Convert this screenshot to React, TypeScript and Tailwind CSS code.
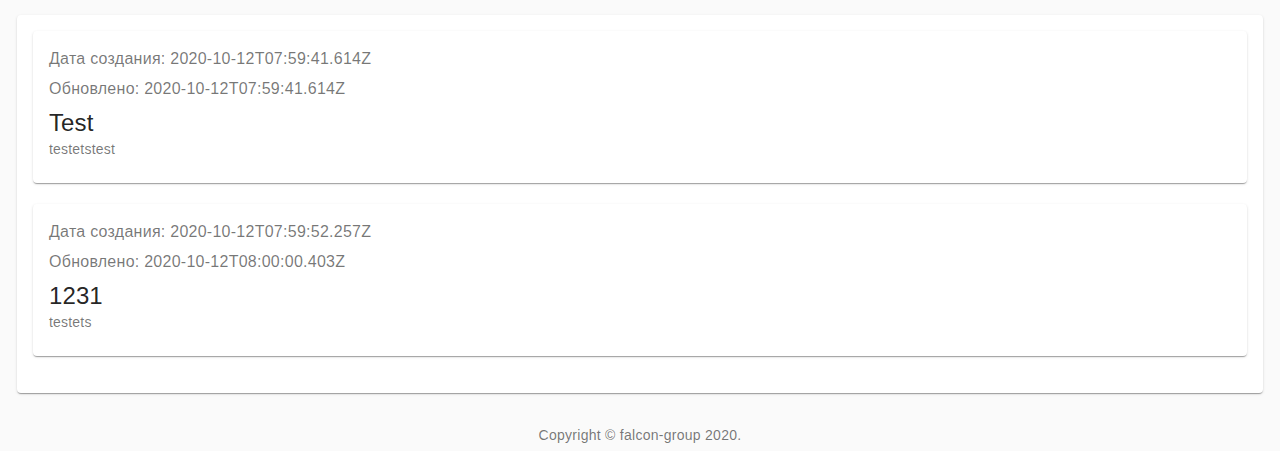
import React from "react";

const shadow =
  "shadow-[0px_2px_1px_-1px_rgba(0,0,0,0.2),0px_1px_1px_0px_rgba(0,0,0,0.14),0px_1px_3px_0px_rgba(0,0,0,0.12)]";

const items = [
  {
    created: "2020-10-12T07:59:41.614Z",
    updated: "2020-10-12T07:59:41.614Z",
    title: "Test",
    body: "testetstest",
  },
  {
    created: "2020-10-12T07:59:52.257Z",
    updated: "2020-10-12T08:00:00.403Z",
    title: "1231",
    body: "testets",
  },
];

export default function App() {
  return (
    <div className="min-h-[451px] bg-[#fafafa] pt-[15px] font-['Liberation_Sans',Arial,sans-serif]">
      <div className={`mx-[17px] rounded bg-white px-4 pt-4 pb-4 ${shadow}`}>
        {items.map((it, i) => (
          <div key={i} className={`mb-[21px] rounded bg-white px-4 pt-4 pb-6 ${shadow}`}>
            <p className="mb-[5.6px] text-base leading-6 tracking-[0.26px] text-[rgba(0,0,0,0.54)]">
              Дата создания: {it.created}
            </p>
            <p className="mb-[6.6px] text-base leading-6 tracking-[0.26px] text-[rgba(0,0,0,0.54)]">
              Обновлено: {it.updated}
            </p>
            <h5 className="text-2xl leading-8 tracking-[0.1px] text-[rgba(0,0,0,0.87)]">{it.title}</h5>
            <p className="text-sm leading-5 tracking-[0.2px] text-[rgba(0,0,0,0.54)]">{it.body}</p>
          </div>
        ))}
      </div>
      <p className="mt-8 text-center text-sm leading-5 tracking-[0.27px] text-[rgba(0,0,0,0.54)]">
        Copyright © falcon-group 2020.
      </p>
    </div>
  );
}
